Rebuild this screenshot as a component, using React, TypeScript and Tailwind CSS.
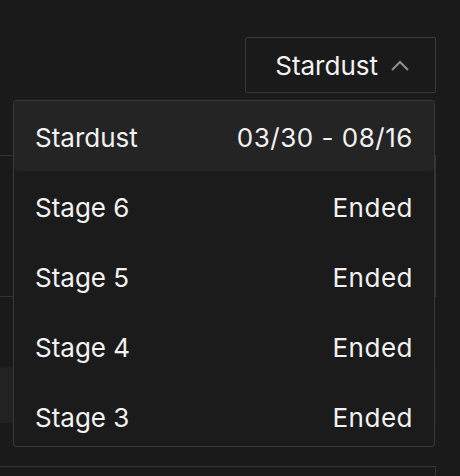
import { useState } from "react"

const SEASONS = [
  { name: "Stardust", status: "03/30 - 08/16" },
  { name: "Stage 6", status: "Ended" },
  { name: "Stage 5", status: "Ended" },
  { name: "Stage 4", status: "Ended" },
  { name: "Stage 3", status: "Ended" },
]

function Chevron() {
  return (
    <svg width="20" height="11" viewBox="0 0 20 11" fill="none" className="shrink-0">
      <polyline points="2,10 10,2 18,10" stroke="#8c8c8c" strokeWidth="2.2" strokeLinejoin="miter" />
    </svg>
  )
}

export default function App() {
  const [open, setOpen] = useState(true)
  const [selected, setSelected] = useState("Stardust")

  return (
    <main
      className="h-[476px] w-[460px] overflow-hidden bg-[#1a1a1a] pr-6 pt-[37px] text-[#f2f2f2]"
      style={{ fontFamily: "Inter, 'Noto Sans', sans-serif" }}
    >
      <div className="relative flex justify-end">
        <button
          type="button"
          onClick={() => setOpen(!open)}
          className="flex h-[56px] w-[191px] items-center justify-end gap-[12px] rounded-[2px] border border-[#3a3a3a] pr-[25px] text-[26px]"
        >
          {selected}
          <Chevron />
        </button>

        {open ? (
          <div className="absolute right-[1px] top-[63px] z-10 h-[347px] w-[422px] overflow-hidden rounded-[3px] border border-[#383838] bg-[#1b1b1b]">
            {SEASONS.map((season) => (
              <div
                key={season.name}
                onClick={() => setSelected(season.name)}
                className={`flex h-[70px] items-center justify-between rounded-[4px] px-[21px] pt-[2px] text-[26px] ${
                  season.name === selected ? "bg-[#242424]" : ""
                }`}
              >
                <span>{season.name}</span>
                <span className="tracking-[0.02em]">{season.status}</span>
              </div>
            ))}
          </div>
        ) : null}
      </div>

      <section className="mt-[62px] h-[142px] border border-l-0 border-[#343434]" />
      <div className="mt-[70px] h-[56px] bg-[#222222]" />
      <section className="mt-[43px] h-[10px] border border-b-0 border-l-0 border-[#343434]" />
    </main>
  )
}
